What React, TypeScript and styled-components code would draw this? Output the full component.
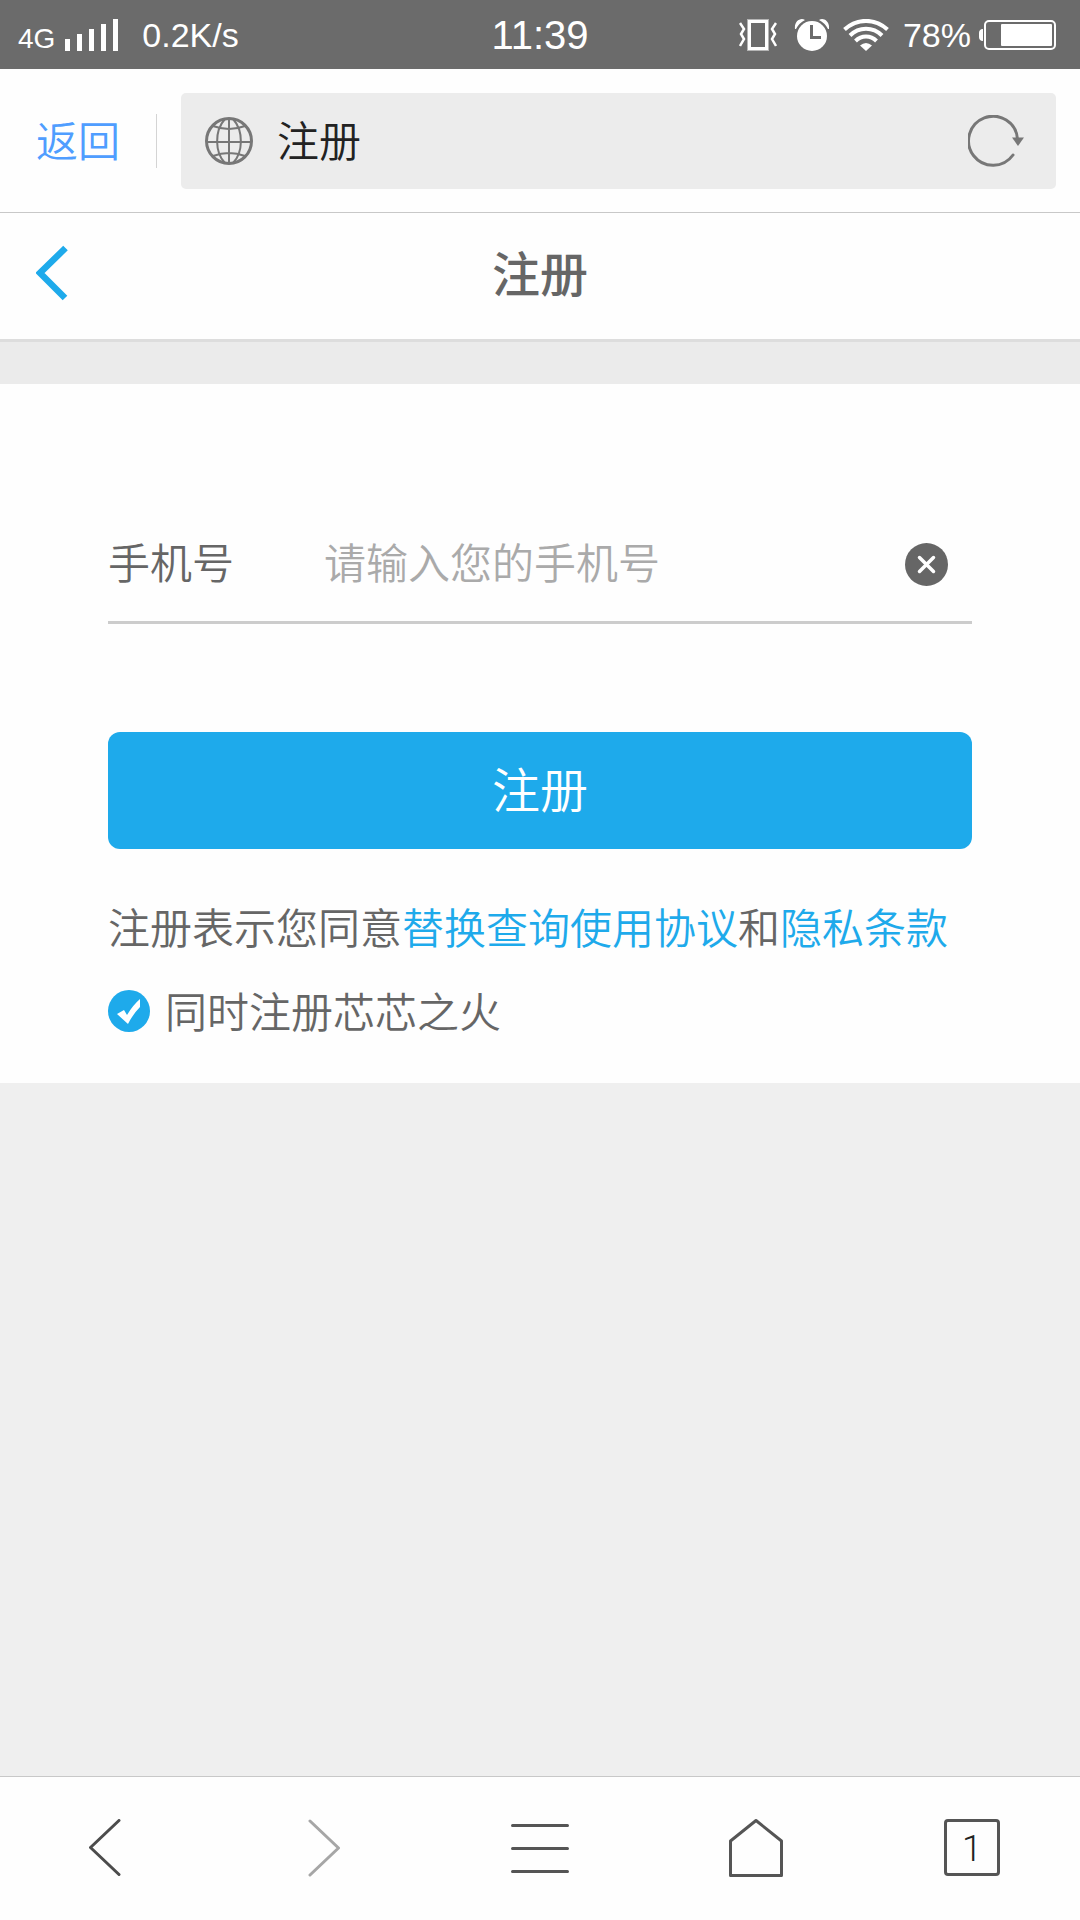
import React, { useState } from "react";
import styled, { createGlobalStyle } from "styled-components";

const GlobalStyle = createGlobalStyle`
  *, *::before, *::after { box-sizing: border-box; }
  body {
    margin: 0;
    background: #efefef;
    font-family: "Liberation Sans", "Noto Sans CJK SC", sans-serif;
    font-size: 42px;
    font-weight: 350;
    color: #666;
  }
  button, input {
    font: inherit;
    color: inherit;
    border: 0;
    padding: 0;
    background: none;
    outline: none;
  }
  svg { display: block; flex: none; }
`;

const Screen = styled.div`
  min-height: 100vh;
  display: flex;
  flex-direction: column;
`;

/* Status bar */
const StatusBar = styled.div`
  height: 69px;
  padding: 0 18px;
  display: grid;
  grid-template-columns: 1fr auto 1fr;
  align-items: center;
  background: #6b6b6b;
  color: #fff;
`;

const StatusGroup = styled.div<{ $end?: boolean }>`
  display: flex;
  align-items: center;
  gap: ${(p) => (p.$end ? 14 : 10)}px;
  padding-right: ${(p) => (p.$end ? 6 : 0)}px;
  justify-content: ${(p) => (p.$end ? "flex-end" : "flex-start")};
`;

const StatusText = styled.span`
  font-size: 34px;
  line-height: 40px;
`;

const Speed = styled(StatusText)`
  padding-left: 14px;
`;

const Network = styled.span`
  font-size: 28px;
  line-height: 28px;
  padding-top: 8px;
`;

const Clock = styled.time`
  font-size: 40px;
  line-height: 48px;
`;

const Power = styled.div`
  display: flex;
  align-items: center;
  gap: 8px;
`;

/* Browser address bar */
const BrowserBar = styled.div`
  height: 144px;
  padding: 0 24px 0 36px;
  display: flex;
  align-items: center;
  background: #fefefe;
  border-bottom: 1px solid #c8c8c8;
`;

const BrowserBack = styled.button`
  color: #4f9dff;
  line-height: 50px;
  padding: 4px 36px 0 0;
  border-right: 1px solid #d4d4d4;
`;

const AddressField = styled.div`
  flex: 1;
  min-width: 0;
  height: 96px;
  margin-left: 24px;
  padding: 0 32px 0 24px;
  display: flex;
  align-items: center;
  gap: 24px;
  background: #ececec;
  border-radius: 5px;
`;

const AddressInput = styled.input`
  flex: 1;
  min-width: 0;
  height: 64px;
  padding-bottom: 4px;
  color: #222;
`;

const IconButton = styled.button`
  display: flex;
  align-items: center;
  justify-content: center;
`;

/* Page header */
const PageHeader = styled.header`
  height: 129px;
  padding: 0 36px;
  display: grid;
  grid-template-columns: 1fr auto 1fr;
  align-items: center;
  justify-items: start;
  background: #fefefe;
  border-bottom: 3px solid #ddd;
`;

const HeaderBack = styled(IconButton)`
  padding-bottom: 6px;
`;

const Title = styled.h1`
  margin: 0;
  font-size: 48px;
  font-weight: 500;
  line-height: 60px;
`;

const Spacer = styled.div`
  height: 42px;
  background: #ebebeb;
`;

/* Registration form */
const Form = styled.form`
  padding: 120px 10% 27px;
  display: flex;
  flex-direction: column;
  background: #fefefe;
`;

const FieldRow = styled.div`
  height: 120px;
  padding: 4px 24px 0 0;
  display: flex;
  align-items: center;
  border-bottom: 3px solid #ccc;
`;

const FieldLabel = styled.label`
  flex: none;
  width: 216px;
  line-height: 60px;
`;

const PhoneInput = styled.input`
  flex: 1;
  min-width: 0;
  height: 60px;
  &::placeholder { color: #aaa; opacity: 1; }
`;

const SubmitButton = styled.button`
  height: 117px;
  margin: 108px 0 39px;
  padding-bottom: 8px;
  border-radius: 12px;
  background: #1eaaeb;
  color: #fff;
  font-size: 48px;
`;

const Terms = styled.p`
  margin: 0;
  line-height: 84px;
`;

const TermsLink = styled.a`
  color: #1eaaeb;
  text-decoration: none;
`;

const CheckRow = styled.label`
  display: flex;
  align-items: center;
  gap: 15px;
  line-height: 84px;
`;

const CheckInput = styled.input`
  position: absolute;
  inset: 0;
  margin: 0;
  opacity: 0;
`;

const CheckMark = styled.span`
  position: relative;
  width: 42px;
  height: 42px;
  margin-bottom: 6px;
`;

const Blank = styled.div`
  flex: 1;
  background: #efefef;
`;

/* Bottom toolbar */
const Toolbar = styled.nav`
  height: 144px;
  padding-bottom: 2px;
  display: grid;
  grid-template-columns: repeat(5, 1fr);
  background: #fefefe;
  border-top: 1px solid #c8c8c8;
`;

const TabCount = styled.span`
  width: 56px;
  height: 57px;
  border: 3px solid #555;
  border-radius: 4px;
  color: #222;
  font-family: Roboto, "Liberation Sans", sans-serif;
  font-size: 36px;
  font-weight: 300;
  line-height: 54px;
`;

const SignalIcon = () => (
  <svg width="53" height="32" viewBox="0 0 53 32" fill="#fff">
    <path d="M0 20h5v12H0zM12 15h5v17h-5zM24 10h5v22h-5zM36 5h5v27h-5zM48 0h5v32h-5z" />
  </svg>
);

const VibrateIcon = () => (
  <svg width="38" height="32" viewBox="0 0 38 32" fill="none" stroke="#fff">
    <rect x="8.500" y="0.500" width="21" height="31" strokeWidth="1" opacity="0.5" />
    <rect x="10.500" y="2.500" width="17" height="27" strokeWidth="3" />
    <path d="M1 4l4 6-3 5 3 5-4 7M37 4l-4 6 3 5-3 5 4 7" strokeWidth="2.500" />
  </svg>
);

const AlarmIcon = () => (
  <svg width="38" height="32" viewBox="-4 0 38 32" fill="#fff">
    <circle cx="17" cy="17" r="15" />
    <path d="M0 10C-1 3 5-2 10 1Q4 4 1 10zM34 10C35 3 29-2 24 1Q30 4 33 10z" />
    <path d="M16.500 6v12.500H26" fill="none" stroke="#6b6b6b" strokeWidth="3" />
  </svg>
);

const WifiIcon = () => (
  <svg width="46" height="32" viewBox="0 0 46 32" fill="none" stroke="#fff" strokeWidth="4">
    <path d="M1.500 10.500C14-1 32-1 44.500 10.500M7 16.500C16 7.500 30 7.500 39 16.500M12.500 22C18.500 16 27.500 16 33.500 22" />
    <path d="M17 26.500Q23 21.500 29 26.500L23 32z" fill="#fff" stroke="none" />
  </svg>
);

const BatteryIcon = () => (
  <svg width="77" height="30" viewBox="0 0 77 30">
    <path d="M4 9v12C1 21 0 19 0 17v-4c0-2 1-4 4-4z" fill="#fff" />
    <rect x="6" y="1" width="70" height="28" rx="4" fill="none" stroke="#fff" strokeWidth="2" />
    <rect x="22" y="4" width="51" height="22" rx="1" fill="#fff" />
  </svg>
);

const GlobeIcon = () => (
  <svg width="48" height="48" viewBox="0 0 48 48" fill="none" stroke="#777" strokeWidth="2">
    <circle cx="24" cy="24" r="22.500" strokeWidth="3" />
    <path d="M24 2v44M2 25h44M8 9q16 6 32 0M8 39q16-6 32 0" />
    <path d="M20 2C9 14 10 36 20 46M28 2c11 12 10 34 0 44" />
  </svg>
);

const ReloadIcon = () => (
  <svg width="56" height="52" viewBox="0 0 56 52">
    <path d="M45 40A24.500 24.500 0 1 1 49.500 24" fill="none" stroke="#777" strokeWidth="3" strokeLinecap="round" />
    <path d="M44 22.500h12L50 31z" fill="#777" />
  </svg>
);

const HeaderBackIcon = () => (
  <svg width="32" height="56" viewBox="0 0 32 56" fill="none" stroke="#1eaaeb" strokeWidth="6.500">
    <path d="M29.500 3L4 28l25 25" />
  </svg>
);

const ClearIcon = () => (
  <svg width="43" height="43" viewBox="0 0 43 43">
    <circle cx="21.500" cy="21.500" r="21.500" fill="#666" />
    <path d="M14.500 14.500l14 14m0-14l-14 14" stroke="#fff" strokeWidth="3.500" strokeLinecap="round" />
  </svg>
);

const TickIcon = ({ on }: { on: boolean }) => (
  <svg width="42" height="42" viewBox="0 0 42 42">
    <circle cx="21" cy="21" r="21" fill={on ? "#1eaaeb" : "#ccc"} />
    <path d="M9 24l7-4 3 5q6-10 13-16v8Q25 24 20 34z" fill="#fff" />
  </svg>
);

const toolStroke = { fill: "none", strokeWidth: 3, strokeLinecap: "round", strokeLinejoin: "round" } as const;

const PrevIcon = () => (
  <svg width="38" height="58" viewBox="0 0 38 58" stroke="#4c4c4c" {...toolStroke}>
    <path d="M30 1.500L1.500 28.500 30 55.500" />
  </svg>
);

const NextIcon = () => (
  <svg width="34" height="58" viewBox="0 0 34 58" stroke="#a6a6a6" {...toolStroke}>
    <path d="M3 2l28.500 27L3 56" />
  </svg>
);

const MenuIcon = () => (
  <svg width="58" height="50" viewBox="0 0 58 50" stroke="#555" {...toolStroke}>
    <path d="M1.500 2.500h55M1.500 25.500h55M1.500 48.500h55" />
  </svg>
);

const HomeIcon = () => (
  <svg width="54" height="58" viewBox="0 0 54 58" stroke="#555" {...toolStroke}>
    <path d="M1.500 22L27 1.500 52.500 22v34.500h-51z" />
  </svg>
);

export default function App() {
  const [address, setAddress] = useState("注册");
  const [phone, setPhone] = useState("");
  const [joined, setJoined] = useState(true);

  return (
    <Screen>
      <GlobalStyle />
      <StatusBar>
        <StatusGroup>
          <Network>4G</Network>
          <SignalIcon />
          <Speed>0.2K/s</Speed>
        </StatusGroup>
        <Clock>11:39</Clock>
        <StatusGroup $end>
          <VibrateIcon />
          <AlarmIcon />
          <WifiIcon />
          <Power>
            <StatusText>78%</StatusText>
            <BatteryIcon />
          </Power>
        </StatusGroup>
      </StatusBar>

      <BrowserBar>
        <BrowserBack type="button">返回</BrowserBack>
        <AddressField>
          <GlobeIcon />
          <AddressInput
            type="text"
            aria-label="地址"
            value={address}
            onChange={(e) => setAddress(e.target.value)}
          />
          <IconButton type="button" aria-label="刷新">
            <ReloadIcon />
          </IconButton>
        </AddressField>
      </BrowserBar>

      <PageHeader>
        <HeaderBack type="button" aria-label="返回上一页">
          <HeaderBackIcon />
        </HeaderBack>
        <Title>注册</Title>
      </PageHeader>
      <Spacer />

      <Form onSubmit={(e) => e.preventDefault()}>
        <FieldRow>
          <FieldLabel htmlFor="phone">手机号</FieldLabel>
          <PhoneInput
            id="phone"
            type="tel"
            placeholder="请输入您的手机号"
            value={phone}
            onChange={(e) => setPhone(e.target.value)}
          />
          <IconButton type="button" aria-label="清除" onClick={() => setPhone("")}>
            <ClearIcon />
          </IconButton>
        </FieldRow>
        <SubmitButton type="submit">注册</SubmitButton>
        <Terms>
          注册表示您同意<TermsLink href="#agreement">替换查询使用协议</TermsLink>和
          <TermsLink href="#privacy">隐私条款</TermsLink>
        </Terms>
        <CheckRow>
          <CheckMark>
            <CheckInput type="checkbox" checked={joined} onChange={(e) => setJoined(e.target.checked)} />
            <TickIcon on={joined} />
          </CheckMark>
          同时注册芯芯之火
        </CheckRow>
      </Form>
      <Blank />

      <Toolbar>
        <IconButton type="button" aria-label="后退">
          <PrevIcon />
        </IconButton>
        <IconButton type="button" aria-label="前进">
          <NextIcon />
        </IconButton>
        <IconButton type="button" aria-label="菜单">
          <MenuIcon />
        </IconButton>
        <IconButton type="button" aria-label="主页">
          <HomeIcon />
        </IconButton>
        <IconButton type="button" aria-label="窗口">
          <TabCount>1</TabCount>
        </IconButton>
      </Toolbar>
    </Screen>
  );
}
